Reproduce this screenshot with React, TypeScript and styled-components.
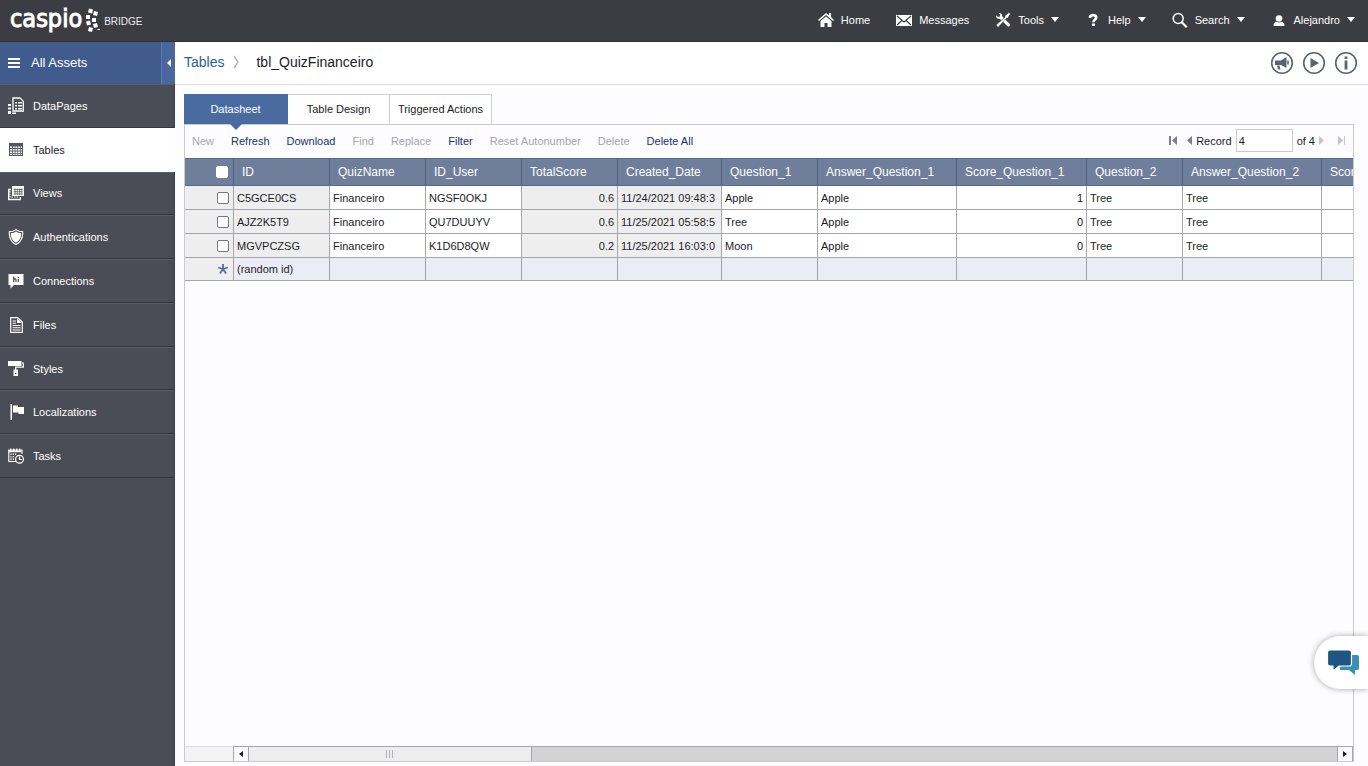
import React from "react";
import styled, { createGlobalStyle, css } from "styled-components";

const GlobalStyle = createGlobalStyle`
  *, *::before, *::after { box-sizing: border-box; }
  body {
    margin: 0;
    background: #fdfdff;
    color: #1c1c1f;
    font-family: "Liberation Sans", Arial, Helvetica, sans-serif;
    font-size: 11px;
    line-height: 14px;
  }
  button, input { font: inherit; color: inherit; }
  button { border: 0; padding: 0; background: none; cursor: pointer; }
  a { color: inherit; text-decoration: none; }
  svg { display: block; flex: none; }
`;

const Page = styled.div`
  display: flex;
  flex-direction: column;
  min-height: 100vh;
`;

const TopBar = styled.header`
  display: flex;
  align-items: center;
  justify-content: space-between;
  height: 42px;
  padding: 0 13px 2px 10px;
  background: #3c3d42;
  border-bottom: 1px solid #2e2f35;
  color: #fff;
`;

const Brand = styled.a`
  display: flex;
  align-items: center;
  height: 38px;
  gap: 3px;
`;

const BrandWord = styled.span`
  font-family: "DejaVu Sans Condensed", "Open Sans", sans-serif;
  font-size: 25px;
  line-height: 32px;
  padding-bottom: 2px;
  -webkit-text-stroke: 1px #fff;
`;

const BrandProduct = styled.span`
  font-size: 10px;
  line-height: 12px;
  padding-top: 5px;
  color: #ececf0;
`;

const TopNav = styled.nav`
  display: flex;
  align-items: center;
  gap: 26px;
`;

const TopItem = styled.button`
  display: flex;
  align-items: center;
  gap: 7px;
`;

const Body = styled.div`
  display: flex;
  flex: 1;
`;

const Sidebar = styled.aside`
  flex: none;
  width: 175px;
  background: #4b4d56;
  border-right: 1px solid #3b3c44;
  color: #fff;
`;

const AllAssets = styled.div`
  display: flex;
  height: 42px;
  background: #415b8c;
  margin-right: -1px;
`;

const AllAssetsLink = styled.a`
  display: flex;
  flex: 1;
  align-items: center;
  gap: 11px;
  padding-left: 8px;
  font-size: 13px;
`;

const CollapseButton = styled.button`
  display: flex;
  align-items: center;
  justify-content: center;
  width: 14px;
  background: #4a669c;
  border-left: 1px solid #5b78ac;
`;

const SideList = styled.ul`
  display: grid;
  grid-auto-rows: 1fr;
  height: 394px;
  margin: 0;
  padding: 0;
  list-style: none;
`;

const SideLink = styled.a<{ $active?: boolean }>`
  display: flex;
  align-items: center;
  gap: 9px;
  height: 100%;
  padding-left: 8px;
  border-top: 1px solid #5c5e67;
  border-bottom: 1px solid #34353c;
  ${(p) =>
    p.$active &&
    css`
      margin-right: -1px;
      background: #fff;
      border-color: #fff;
      color: #1c1c1f;
    `}
`;

const Main = styled.main`
  display: flex;
  flex: 1;
  flex-direction: column;
  min-width: 0;
`;

const CrumbBar = styled.div`
  display: flex;
  align-items: center;
  justify-content: space-between;
  height: 43px;
  padding: 0 10px 0 9px;
  background: #fff;
  border-bottom: 1px solid #dcdce0;
`;

const Crumbs = styled.nav`
  display: flex;
  align-items: center;
  gap: 8px;
  padding-bottom: 2px;
  font-size: 14px;
  line-height: 18px;
`;

const CrumbLink = styled.a`
  color: #2b6294;
`;

const CrumbCurrent = styled.span`
  padding-left: 8px;
`;

const RoundActions = styled.div`
  display: flex;
  gap: 8px;
`;

const Workspace = styled.div`
  display: flex;
  flex: 1;
  flex-direction: column;
  min-width: 0;
  padding: 9px 14px 4px 9px;
`;

const Tabs = styled.div`
  display: flex;
`;

const Tab = styled.button<{ $active?: boolean }>`
  position: relative;
  width: 102px;
  height: 30px;
  padding-bottom: 2px;
  background: #fff;
  border: 1px solid #d2d2d6;
  border-left: 0;
  border-bottom: 0;
  ${(p) =>
    p.$active &&
    css`
      width: 104px;
      background: #496b9f;
      border-color: #496b9f;
      color: #fff;
      &::after {
        content: "";
        position: absolute;
        top: 100%;
        left: 50%;
        margin-left: -6px;
        border: 6px solid transparent;
        border-top-color: #496b9f;
        border-bottom: 0;
      }
    `}
`;

const Panel = styled.section`
  display: flex;
  flex: 1;
  flex-direction: column;
  min-width: 0;
  border: 1px solid #c9c9ce;
`;

const Toolbar = styled.div`
  display: flex;
  align-items: center;
  justify-content: space-between;
  height: 33px;
  padding: 0 11px 2px 7px;
`;

const Commands = styled.div`
  display: flex;
  gap: 17px;
`;

const Command = styled.button`
  color: #16336b;
  &:disabled { color: #a5a5a9; cursor: default; }
`;

const Pager = styled.div`
  display: flex;
  align-items: center;
  gap: 4px;
`;

const PagerButton = styled.button<{ $wide?: boolean }>`
  display: flex;
  width: ${(p) => (p.$wide ? 14 : 5)}px;
  color: #74819b;
  &:disabled { color: #c3c5cc; }
`;

const RecordInput = styled.input`
  width: 57px;
  height: 23px;
  padding: 0 2px;
  border: 1px solid #c9c9ce;
  background: #fff;
`;

const GridArea = styled.div`
  flex: 1;
  min-width: 0;
  overflow: hidden;
  contain: inline-size;
`;

const Grid = styled.table`
  width: 1268px;
  table-layout: fixed;
  border-collapse: separate;
  border-spacing: 0;
`;

const Col = styled.col<{ $w: number }>`
  width: ${(p) => p.$w}px;
`;

const HeadCell = styled.th<{ $check?: boolean }>`
  height: 28px;
  padding: 0 0 0 ${(p) => (p.$check ? 0 : 8)}px;
  background: #6f7f9b;
  border-top: 1px solid #55678a;
  border-bottom: 1px solid #55678a;
  border-right: 1px solid #4d5f80;
  color: #fff;
  font-size: 12px;
  font-weight: 400;
  text-align: left;
  white-space: nowrap;
`;

const Cell = styled.td<{ $locked?: boolean; $right?: boolean }>`
  height: 24px;
  padding: 0 3px;
  overflow: hidden;
  background: ${(p) => (p.$locked ? "#efeeef" : "#fff")};
  border-right: 1px solid #a3a6ad;
  border-bottom: 1px solid #a3a6ad;
  text-align: ${(p) => (p.$right ? "right" : "left")};
  white-space: nowrap;
`;

const NewCell = styled(Cell)`
  height: 23px;
  background: ${(p) => (p.$locked ? "#efeeef" : "#ececf7")};
`;

const CheckSlot = styled.div`
  display: flex;
  justify-content: flex-end;
  padding-right: 1px;
`;

const HeadSlot = styled(CheckSlot)`
  padding-right: 5px;
`;

const Check = styled.input`
  appearance: none;
  width: 12px;
  height: 12px;
  margin: 0;
  background: #fff;
  border: 1px solid #77777c;
  border-radius: 2px;
`;

const HeadCheck = styled(Check)`
  border-color: #fff;
`;

const ScrollRow = styled.div`
  display: flex;
  height: 15px;
`;

const ScrollCorner = styled.div`
  width: 48px;
  background: #f3f3f4;
  border-top: 1px solid #dddde0;
`;

const ScrollButton = styled.button`
  display: flex;
  align-items: center;
  justify-content: center;
  width: 16px;
  background: #fafafa;
  border: 1px solid #a6a6aa;
  border-bottom: 0;
`;

const ScrollTrack = styled.div`
  flex: 1;
  background: #d3d3d4;
  border-top: 1px solid #a6a6aa;
`;

const ScrollThumb = styled.div`
  display: flex;
  align-items: center;
  justify-content: center;
  gap: 2px;
  width: 26%;
  height: 14px;
  background: #ededee;
  border-right: 1px solid #a6a6aa;
`;

const Grip = styled.span`
  width: 1px;
  height: 8px;
  background: #b4b4b8;
`;

const ChatButton = styled.button`
  position: fixed;
  right: 0;
  bottom: 77px;
  display: flex;
  align-items: center;
  width: 54px;
  height: 53px;
  padding-left: 13px;
  background: #fff;
  border-radius: 27px 0 0 27px;
  box-shadow: 0 0 6px rgba(0, 0, 0, 0.35);
`;

const Svg = ({ w = 16, h = 16, children }: { w?: number; h?: number; children: React.ReactNode }) => (
  <svg width={w} height={h} viewBox={`0 0 ${w} ${h}`} fill="currentColor" aria-hidden="true">
    {children}
  </svg>
);

const Caret = () => <Svg w={8} h={5}><path d="M0 0h8L4 5z" /></Svg>;

const topItems: { label: string; caret?: boolean; icon: React.ReactNode }[] = [
  {
    label: "Home",
    icon: <Svg><path d="M8 1 0 8l1 1 7-6 7 6 1-1-3-3V1h-2v2.500z" /><path d="M8 4.500 2.500 9v6h4v-4h3v4h4V9z" /></Svg>,
  },
  {
    label: "Messages",
    icon: (
      <Svg>
        <path d="M0 3h16v11H0z" />
        <path d="M1 4l7 6 7-6M1 13l5-4.500M15 13l-5-4.500" fill="none" stroke="#3c3d42" strokeWidth="1.1" />
      </Svg>
    ),
  },
  {
    label: "Tools",
    caret: true,
    icon: (
      <Svg>
        <path d="M3.500 1C5.500.600 7.500 2 7.300 4.600l7.500 7.500c1.200 1.200-.800 3.500-2.200 2.200L5 7C2.500 7.300.700 5.600 1 3.200l2 1.700 1.900-.500.300-1.700z" />
        <path d="m15.500 2-1.700-1.500L10 3.600v1.700L1 13l2 2.500 8-9 1.500-.200z" stroke="#3c3d42" strokeWidth=".6" />
      </Svg>
    ),
  },
  {
    label: "Help",
    caret: true,
    icon: (
      <Svg>
        <path d="M5 6C5 4 6.300 3.200 8 3.200s3.200.800 3.200 2.500C11.200 7.700 8.500 7.500 8.500 10.300" fill="none" stroke="currentColor" strokeWidth="2.700" />
        <path d="M7 11.500h3V14H7z" />
      </Svg>
    ),
  },
  {
    label: "Search",
    caret: true,
    icon: (
      <Svg>
        <circle cx="6.200" cy="6.500" r="5" fill="none" stroke="currentColor" strokeWidth="1.500" />
        <path d="m9.700 10.200 5 5" stroke="currentColor" strokeWidth="2.200" />
      </Svg>
    ),
  },
  {
    label: "Alejandro",
    caret: true,
    icon: <Svg><circle cx="8" cy="6.500" r="3.300" /><path d="M2.500 14c0-3 1.500-4.300 3.300-4.300 1.400.9 3 .9 4.400 0 1.800 0 3.300 1.300 3.300 4.300z" /></Svg>,
  },
];

const sideItems: { label: string; active?: boolean; icon: React.ReactNode }[] = [
  {
    label: "DataPages",
    icon: (
      <Svg w={16} h={18}>
        <path d="M5 1h7l3.300 3.300V14H5z" fill="none" stroke="currentColor" strokeWidth="1.300" />
        <path d="M7 5h2v1.500H7zM10 5h4v1.500h-4zM7 8h2v1.500H7zM10 8h4v1.500h-4zM7 11h2v1.500H7zM10 11h4v1.500h-4zM0 7h3v2H0zM0 10.500h3v2H0zM0 14h3v3H0zM4 15.500h4V17H4z" />
      </Svg>
    ),
  },
  {
    label: "Tables",
    active: true,
    icon: (
      <Svg>
        <path d="M1 1h14v13H1z" fill="#55575f" />
        <path d="M2 4.500h2V6H2zm2.700 0h2V6h-2zm2.700 0h2V6h-2zm2.700 0h2V6h-2zm2.700 0H14V6h-1.200zM2 7h2v1.500H2zm2.700 0h2v1.500h-2zm2.700 0h2v1.500h-2zm2.700 0h2v1.500h-2zm2.700 0H14v1.500h-1.200zM2 9.400h2v1.500H2zm2.700 0h2v1.500h-2zm2.700 0h2v1.500h-2zm2.700 0h2v1.500h-2zm2.700 0H14v1.500h-1.200zM2 11.800h2V13H2zm2.700 0h2V13h-2zm2.700 0h2V13h-2zm2.700 0h2V13h-2zm2.700 0H14V13h-1.200z" fill="#fff" />
      </Svg>
    ),
  },
  {
    label: "Views",
    icon: (
      <Svg>
        <path d="M3 4.500H.700v10h11.600V12" fill="none" stroke="currentColor" strokeWidth="1.400" />
        <path d="M2 6v6h8" fill="none" stroke="currentColor" strokeDasharray="1.500 1" />
        <path d="M4 1h12v10H4z" />
        <path d="M5.500 4.500h9M5.500 6.700h9M5.500 8.900h9M7 3.500V10M9.300 3.500V10M11.600 3.500V10M13.900 3.500V10" stroke="#4b4d56" strokeWidth=".7" fill="none" />
      </Svg>
    ),
  },
  {
    label: "Authentications",
    icon: (
      <Svg>
        <path d="M8 .700c2 1.500 4.300 2 6.800 2C15 9 13.500 13 8 15.500 2.500 13 1 9 1.200 2.700c2.500 0 4.800-.500 6.800-2z" fill="none" stroke="currentColor" strokeWidth="1.100" />
        <path d="M8 2.600c1.500 1 3.400 1.500 5.200 1.500C13.200 9 11.800 11.800 8 13.700 4.200 11.800 2.800 9 2.800 4.100 4.600 4.100 6.500 3.600 8 2.600z" />
      </Svg>
    ),
  },
  {
    label: "Connections",
    icon: (
      <Svg>
        <path d="M.500 1h15v11H6l-3.500 3.500V12h-2z" />
        <path d="M5.700 3.500V9M5.700 6.500c1-1 2.300-.800 2.300.500v2M10.300 6v3M10.300 3.700V5" fill="none" stroke="#4b4d56" strokeWidth="1.200" />
      </Svg>
    ),
  },
  {
    label: "Files",
    icon: (
      <Svg>
        <path d="M2.700.700h7L14.300 5v10.300H2.700z" fill="none" stroke="currentColor" strokeWidth="1.200" />
        <path d="M9 1v5h5zM4.500 3.500H8v1H4.500zM4.500 5.700H8v1H4.500zM4.500 8H12.500v1h-8zM4.500 10.200h8v1h-8zM4.500 12.400h8v1h-8z" />
      </Svg>
    ),
  },
  {
    label: "Styles",
    icon: (
      <Svg w={16} h={17}>
        <path d="M0 1h13.500v5H0zM5.500 9.500H10V16H5.500z" />
        <path d="M14 3h1.300v4.200H7.700V10" fill="none" stroke="currentColor" strokeWidth="1.200" />
        <circle cx="7.700" cy="13.500" r=".8" fill="#4b4d56" />
      </Svg>
    ),
  },
  {
    label: "Localizations",
    icon: <Svg><path d="M2.500 0H4v16H2.500zM5 1.500h5V3h6v7h-5.500V8.500H5z" /></Svg>,
  },
  {
    label: "Tasks",
    icon: (
      <Svg>
        <path d="M8 13.500H.800V2H14v4" fill="none" stroke="currentColor" strokeWidth="1.100" />
        <path d="M.500 2.500h13v1.700H.500zM2 .500h1.300v3H2zM5 .500h1.300v3H5zM8 .500h1.300v3H8zM11 .500h1.300v3H11z" />
        <path d="M3 5.500V12M5.300 5.500V12M7.600 5.500V8" stroke="currentColor" strokeWidth="1.100" strokeDasharray="1.600 .8" />
        <circle cx="11.500" cy="11.300" r="3.900" fill="#4b4d56" stroke="currentColor" strokeWidth="1.200" />
        <path d="M11.500 8.500v3h2.300" fill="none" stroke="currentColor" strokeWidth="1.200" />
      </Svg>
    ),
  },
];

const commands: [string, boolean][] = [
  ["New", false],
  ["Refresh", true],
  ["Download", true],
  ["Find", false],
  ["Replace", false],
  ["Filter", true],
  ["Reset Autonumber", false],
  ["Delete", false],
  ["Delete All", true],
];

const columns: { name: string; width: number; locked?: boolean; right?: boolean }[] = [
  { name: "ID", width: 96, locked: true },
  { name: "QuizName", width: 96 },
  { name: "ID_User", width: 96 },
  { name: "TotalScore", width: 96, locked: true, right: true },
  { name: "Created_Date", width: 104, locked: true },
  { name: "Question_1", width: 96 },
  { name: "Answer_Question_1", width: 139 },
  { name: "Score_Question_1", width: 130, right: true },
  { name: "Question_2", width: 96 },
  { name: "Answer_Question_2", width: 139 },
  { name: "Score_Question_2", width: 131, right: true },
];

const rows = [
  ["C5GCE0CS", "Financeiro", "NGSF0OKJ", "0.6", "11/24/2021 09:48:3", "Apple", "Apple", "1", "Tree", "Tree", ""],
  ["AJZ2K5T9", "Financeiro", "QU7DUUYV", "0.6", "11/25/2021 05:58:5", "Tree", "Apple", "0", "Tree", "Tree", ""],
  ["MGVPCZSG", "Financeiro", "K1D6D8QW", "0.2", "11/25/2021 16:03:0", "Moon", "Apple", "0", "Tree", "Tree", ""],
];

const Ring = ({ children }: { children: React.ReactNode }) => (
  <Svg w={24} h={24}>
    <circle cx="12" cy="12" r="10.300" fill="none" stroke="currentColor" strokeWidth="1.600" />
    {children}
  </Svg>
);

const RoundButton = styled.button`
  color: #5c6173;
`;

export default function App() {
  return (
    <Page>
      <GlobalStyle />
      <TopBar>
        <Brand href="#">
          <BrandWord>caspio</BrandWord>
          <svg width="16" height="28" viewBox="0 0 16 28" fill="#fff" aria-hidden="true">
            <path d="m4 2.500 4 1-1 4-4-1zM1 9h4v4H1zM9 5l4 1-1 4-4-1zM7 12h4v4H7zM1 15.500l4-1 1 4-4 1zM8 18l4-1 1 4-4 1zM4 21l4 1-1 4-4-1zM12.500 23h2.500v1h-2.500z" />
          </svg>
          <BrandProduct>BRIDGE</BrandProduct>
        </Brand>
        <TopNav aria-label="Account">
          {topItems.map((item) => (
            <TopItem key={item.label}>
              {item.icon}
              <span>{item.label}</span>
              {item.caret && <Caret />}
            </TopItem>
          ))}
        </TopNav>
      </TopBar>
      <Body>
        <Sidebar>
          <AllAssets>
            <AllAssetsLink href="#">
              <Svg w={12} h={12}><path d="M0 1h12v2H0zM0 5h12v2H0zM0 9h12v2H0z" /></Svg>
              All Assets
            </AllAssetsLink>
            <CollapseButton aria-label="Collapse sidebar">
              <Svg w={4} h={8}><path d="M4 0v8L0 4z" /></Svg>
            </CollapseButton>
          </AllAssets>
          <SideList>
            {sideItems.map((item) => (
              <li key={item.label}>
                <SideLink href="#" $active={item.active}>
                  {item.icon}
                  {item.label}
                </SideLink>
              </li>
            ))}
          </SideList>
        </Sidebar>
        <Main>
          <CrumbBar>
            <Crumbs aria-label="Breadcrumb">
              <CrumbLink href="#">Tables</CrumbLink>
              <Svg w={8} h={14}><path d="m2 1 4 6-4 6" fill="none" stroke="#b4b6bc" strokeWidth="1.500" /></Svg>
              <CrumbCurrent>tbl_QuizFinanceiro</CrumbCurrent>
            </Crumbs>
            <RoundActions>
              <RoundButton aria-label="Announcements">
                <Ring>
                  <path d="M5 9.500h6l5.500-3.500v11L11 14H5zM7 14.500h2.500l1 4H8z" />
                  <path d="M18 9.500v4" stroke="currentColor" strokeWidth="1.500" />
                </Ring>
              </RoundButton>
              <RoundButton aria-label="Play video"><Ring><path d="M8.500 7v10l8.500-5z" /></Ring></RoundButton>
              <RoundButton aria-label="Information">
                <Ring><path d="M10.600 5.500h2.800V8h-2.800zM10.600 9.500h2.800V18.500h-2.800z" /></Ring>
              </RoundButton>
            </RoundActions>
          </CrumbBar>
          <Workspace>
            <Tabs role="tablist">
              <Tab role="tab" aria-selected="true" $active>Datasheet</Tab>
              <Tab role="tab" aria-selected="false">Table Design</Tab>
              <Tab role="tab" aria-selected="false">Triggered Actions</Tab>
            </Tabs>
            <Panel>
              <Toolbar>
                <Commands>
                  {commands.map(([label, enabled]) => (
                    <Command key={label} disabled={!enabled}>{label}</Command>
                  ))}
                </Commands>
                <Pager>
                  <PagerButton aria-label="First record" $wide>
                    <Svg w={9} h={9}><path d="M0 0h2v9H0zM8 0v9L3 4.500z" /></Svg>
                  </PagerButton>
                  <PagerButton aria-label="Previous record">
                    <Svg w={5} h={9}><path d="M5 0v9L0 4.500z" /></Svg>
                  </PagerButton>
                  <label htmlFor="record">Record</label>
                  <RecordInput id="record" defaultValue="4" />
                  <span>of 4</span>
                  <PagerButton aria-label="Next record" disabled $wide>
                    <Svg w={5} h={9}><path d="M0 0v9l5-4.500z" /></Svg>
                  </PagerButton>
                  <PagerButton aria-label="Last record" disabled>
                    <Svg w={9} h={9}><path d="M1 0v9l5-4.500zM7 0h1v9H7z" /></Svg>
                  </PagerButton>
                </Pager>
              </Toolbar>
              <GridArea>
                <Grid>
                  <colgroup>
                    <Col $w={49} />
                    {columns.map((c) => <Col key={c.name} $w={c.width} />)}
                  </colgroup>
                  <thead>
                    <tr>
                      <HeadCell $check>
                        <HeadSlot><HeadCheck type="checkbox" aria-label="Select all records" /></HeadSlot>
                      </HeadCell>
                      {columns.map((c) => <HeadCell key={c.name}>{c.name}</HeadCell>)}
                    </tr>
                  </thead>
                  <tbody>
                    {rows.map((row) => (
                      <tr key={row[0]}>
                        <Cell $locked>
                          <CheckSlot><Check type="checkbox" aria-label={`Select ${row[0]}`} /></CheckSlot>
                        </Cell>
                        {row.map((value, i) => (
                          <Cell key={columns[i].name} $locked={columns[i].locked} $right={columns[i].right}>{value}</Cell>
                        ))}
                      </tr>
                    ))}
                    <tr>
                      <NewCell $locked>
                        <CheckSlot>
                          <Svg w={12} h={12}>
                            <path d="M6 6V1M6 6 1.200 4.500M6 6l4.800-1.500M6 6l-3 4.500M6 6l3 4.500" fill="none" stroke="#5a6f9e" strokeWidth="1.800" />
                          </Svg>
                        </CheckSlot>
                      </NewCell>
                      {columns.map((c, i) => <NewCell key={c.name}>{i === 0 ? "(random id)" : ""}</NewCell>)}
                    </tr>
                  </tbody>
                </Grid>
              </GridArea>
              <ScrollRow>
                <ScrollCorner />
                <ScrollButton aria-label="Scroll left"><Svg w={4} h={6}><path d="M4 0v6L0 3z" /></Svg></ScrollButton>
                <ScrollTrack>
                  <ScrollThumb><Grip /><Grip /><Grip /></ScrollThumb>
                </ScrollTrack>
                <ScrollButton aria-label="Scroll right"><Svg w={4} h={6}><path d="M0 0v6l4-3z" /></Svg></ScrollButton>
              </ScrollRow>
            </Panel>
          </Workspace>
        </Main>
      </Body>
      <ChatButton aria-label="Open chat">
        <svg width="34" height="28" viewBox="0 0 34 28" aria-hidden="true">
          <path d="M14 6h16q2 0 2 2v11q0 2-2 2h-2v5l-6-5h-9z" fill="#3a8fb7" />
          <path d="M3 1h19q2.500 0 2.500 2.500v11Q24.500 17 22 17H12l-6 5v-5H3Q.500 17 .500 14.500v-11Q.500 1 3 1z" fill="#1f5581" stroke="#fff" strokeWidth="1.200" />
        </svg>
      </ChatButton>
    </Page>
  );
}
